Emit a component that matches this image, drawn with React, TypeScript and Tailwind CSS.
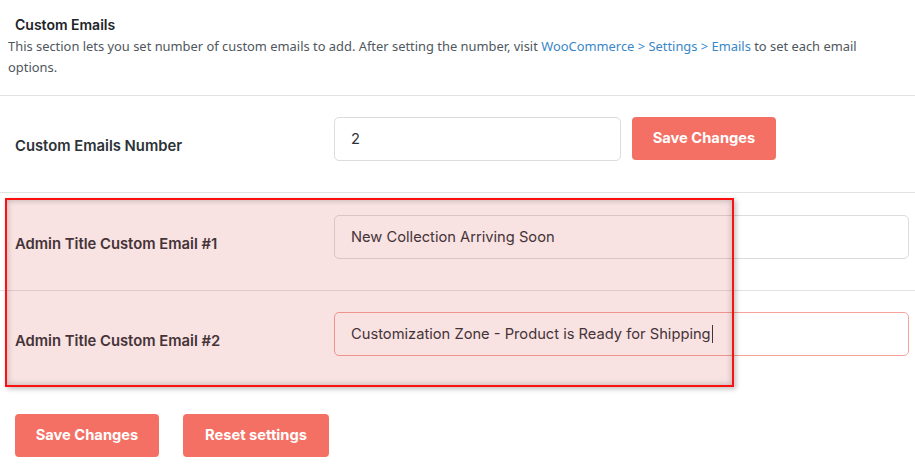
export default function App() {
  const label = 'w-[319px] shrink-0 pt-[19px] text-[14.8px] leading-[20px] font-semibold text-[#2c3338]'
  const input =
    'h-[44px] rounded-[5px] border bg-white px-4 text-[14.7px] text-[#2c3338] outline-none'
  const btn =
    'h-[43px] rounded-[4px] bg-[#f47064] px-5 text-[14.7px] font-bold text-white'

  return (
    <div className="relative h-[474px] w-[915px] overflow-hidden bg-white font-['Inter',sans-serif]">
      <div className="pl-[8px] pt-[15px] pb-[17px]">
        <h2 className="pl-[7px] text-[14px] font-semibold leading-[20px] text-[#1d2327]">Custom Emails</h2>
        <p className="mt-[1px] pr-[40px] font-['Noto_Sans',sans-serif] text-[12.9px] leading-[21px] text-[#50575e]">
          This section lets you set number of custom emails to add. After setting the number, visit{' '}
          <span className="text-[#3a87c7]">WooCommerce &gt; Settings &gt; Emails</span> to set each email
          options.
        </p>
      </div>

      <div className="flex h-[97px] items-start border-t border-[#e2e2e2] pl-[15px] pt-[21px]">
        <div className={label}>Custom Emails Number</div>
        <div className="flex items-start gap-[11px]">
          <input readOnly value="2" className={`${input} w-[287px] border-[#dcdcdc]`} />
          <button className={`${btn} w-[144px]`}>Save Changes</button>
        </div>
      </div>

      <div className="flex h-[98px] items-start border-t border-[#e2e2e2] pl-[15px] pt-[22px]">
        <div className={label}>Admin Title Custom Email #1</div>
        <input readOnly value="New Collection Arriving Soon" className={`${input} w-[575px] border-[#dcdcdc]`} />
      </div>

      <div className="flex h-[97px] items-start border-t border-[#e2e2e2] pl-[15px] pt-[21px]">
        <div className={label}>Admin Title Custom Email #2</div>
        <div className={`${input} flex w-[575px] items-center border-[#f5a39b]`}>
          Customization Zone - Product is Ready for Shipping
          <span className="ml-[1px] h-[18px] w-px bg-[#2c3338]" />
        </div>
      </div>

      <div className="flex gap-[24px] pl-[15px] pt-[27px]">
        <button className={`${btn} h-[39px] w-[144px]`}>Save Changes</button>
        <button className={`${btn} h-[39px] w-[146px]`}>Reset settings</button>
      </div>

      <div className="pointer-events-none absolute left-[5px] top-[198px] h-[189px] w-[729px] border-2 border-[#ff1010] bg-[rgba(205,60,60,0.15)] shadow-[inset_0_0_6px_rgba(0,0,0,0.25),2px_2px_5px_rgba(0,0,0,0.25)]" />
    </div>
  )
}
